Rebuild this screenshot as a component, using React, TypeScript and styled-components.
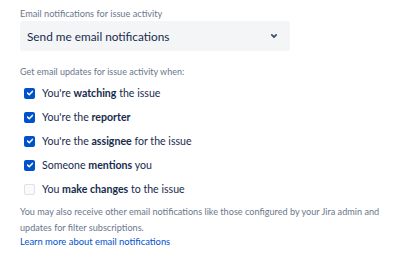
import React from "react";
import styled, { createGlobalStyle } from "styled-components";

const Global = createGlobalStyle`
  html, body { margin: 0; padding: 0; background: #fff; }
  body { font-family: "Lato", "Open Sans", sans-serif; color: #172B4D; }
`;

const Page = styled.div`
  width: 406px;
  box-sizing: border-box;
  padding: 7px 20px 0 20px;
  display: flex;
  flex-direction: column;
`;

const FieldLabel = styled.div`
  font-size: 9.2px;
  line-height: 13px;
  color: #6B778C;
  height: 14px;
`;

const Select = styled.div`
  flex-shrink: 0;
  width: 270px;
  height: 30px;
  box-sizing: border-box;
  background: #F4F5F7;
  border-radius: 3px;
  display: flex;
  align-items: center;
  justify-content: space-between;
  padding: 0 12px 0 7px;
  font-size: 11.8px;
  color: #172B4D;
`;

const Hint = styled.div`
  margin-top: 15px;
  font-size: 9px;
  line-height: 12px;
  color: #6B778C;
`;

const List = styled.div`
  margin-top: 3px;
  display: flex;
  flex-direction: column;
`;

const Row = styled.label`
  height: 24px;
  flex-shrink: 0;
  display: flex;
  align-items: center;
  gap: 7px;
  padding-left: 4px;
  font-size: 10.6px;
  color: #172B4D;
  b { font-weight: 700; }
`;

const Box = styled.span<{ $checked: boolean }>`
  width: 11px;
  height: 11px;
  border-radius: 2px;
  box-sizing: border-box;
  display: flex;
  align-items: center;
  justify-content: center;
  background: ${(p) => (p.$checked ? "#0052CC" : "#FAFBFC")};
  border: ${(p) => (p.$checked ? "none" : "1px solid #DFE1E6")};
`;

const Footer = styled.div`
  margin-top: 3px;
  font-size: 9.15px;
  line-height: 15.5px;
  color: #6B778C;
  white-space: nowrap;
`;

const Link = styled.a`
  color: #0052CC;
  text-decoration: none;
  display: block;
  font-size: 9.4px;
  line-height: 14px;
`;

const Check = () => (
  <svg width="8" height="8" viewBox="0 0 8 8">
    <path d="M1.6 4.1 L3.3 5.7 L6.4 2.4" fill="none" stroke="#fff" strokeWidth="1.5" strokeLinecap="round" strokeLinejoin="round" />
  </svg>
);

const Chevron = () => (
  <svg width="8" height="6" viewBox="0 0 8 6">
    <path d="M1.8 1.9 L4 4 L6.2 1.9" fill="none" stroke="#42526E" strokeWidth="1.8" strokeLinecap="round" strokeLinejoin="round" />
  </svg>
);

const items: { checked: boolean; content: React.ReactNode }[] = [
  { checked: true, content: <>You're <b>watching</b> the issue</> },
  { checked: true, content: <>You're the <b>reporter</b></> },
  { checked: true, content: <>You're the <b>assignee</b> for the issue</> },
  { checked: true, content: <>Someone <b>mentions</b> you</> },
  { checked: false, content: <>You <b>make changes</b> to the issue</> },
];

export default function App() {
  return (
    <>
      <Global />
      <Page>
        <FieldLabel>Email notifications for issue activity</FieldLabel>
        <Select>
          <span>Send me email notifications</span>
          <Chevron />
        </Select>
        <Hint>Get email updates for issue activity when:</Hint>
        <List>
          {items.map((it, i) => (
            <Row key={i}>
              <Box $checked={it.checked}>{it.checked && <Check />}</Box>
              <span>{it.content}</span>
            </Row>
          ))}
        </List>
        <Footer>
          You may also receive other email notifications like those configured by your Jira admin and
          <br />
          updates for filter subscriptions.
          <Link href="#">Learn more about email notifications</Link>
        </Footer>
      </Page>
    </>
  );
}
